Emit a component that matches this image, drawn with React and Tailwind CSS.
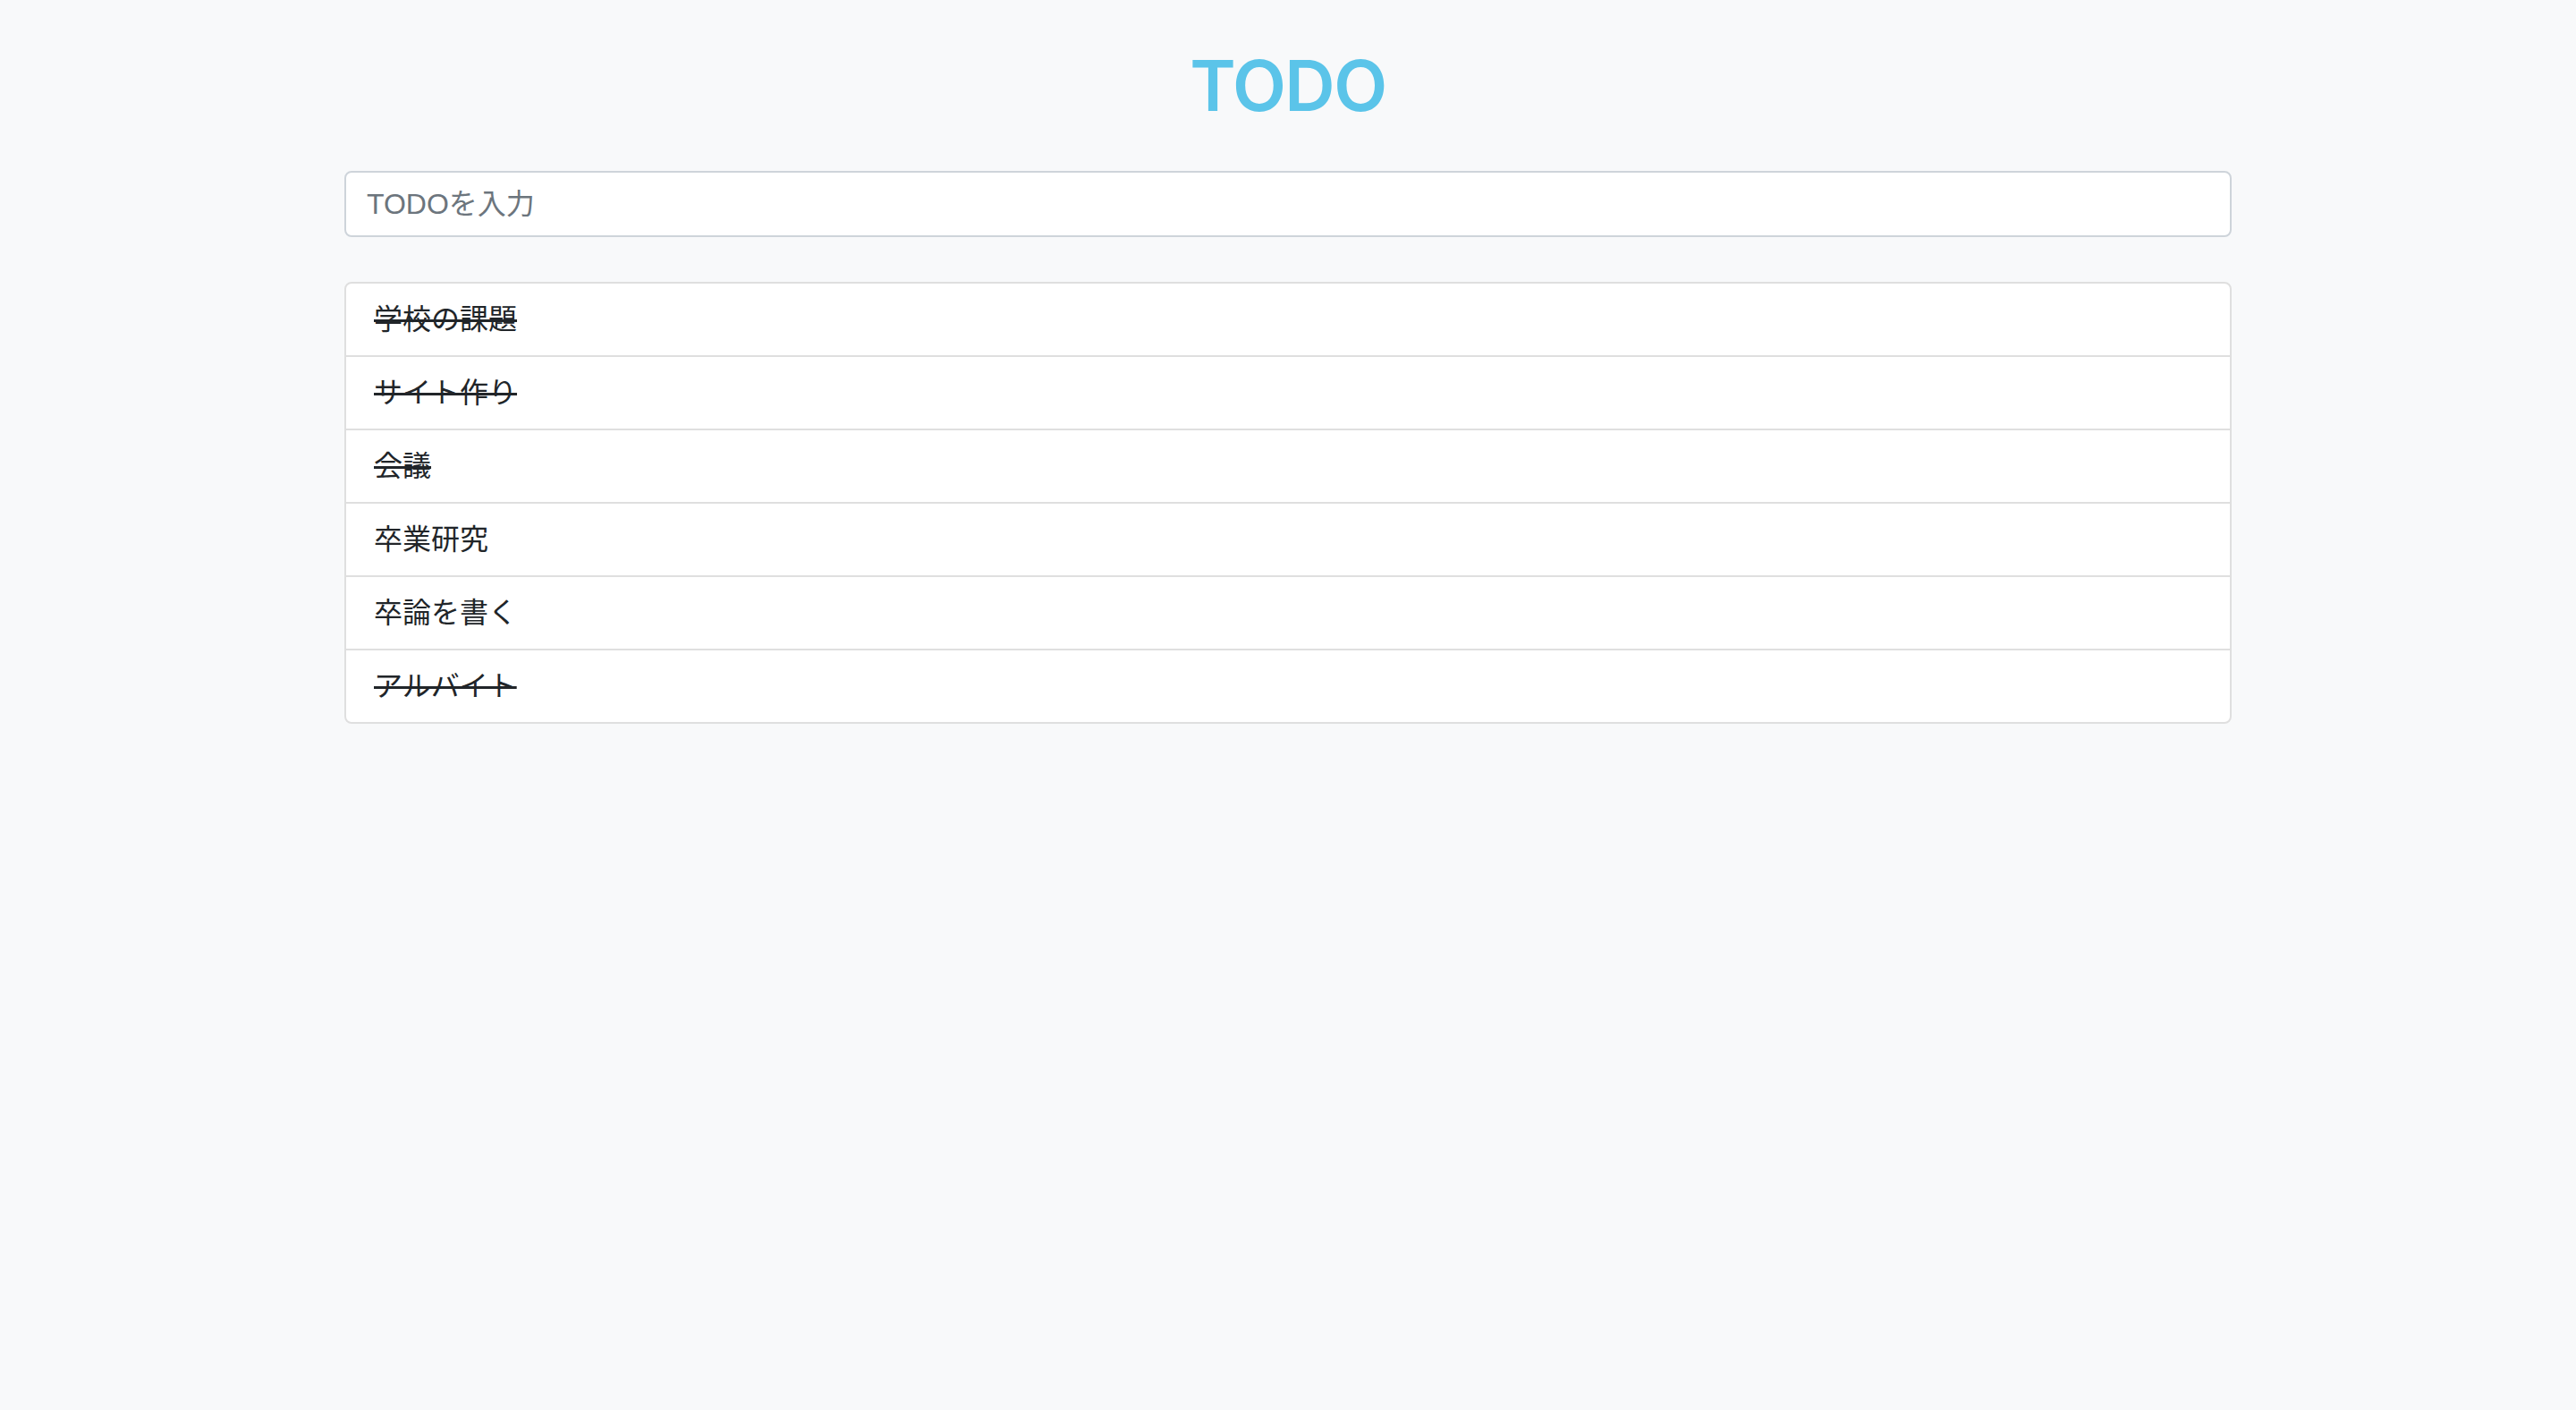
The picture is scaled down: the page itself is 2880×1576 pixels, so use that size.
import React from "react";

const items = [
  { text: "学校の課題", done: true },
  { text: "サイト作り", done: true },
  { text: "会議", done: true },
  { text: "卒業研究", done: false },
  { text: "卒論を書く", done: false },
  { text: "アルバイト", done: true },
];

export default function App() {
  return (
    <div
      className="min-h-screen bg-[#f8f9fa] pt-[56px]"
      style={{ fontFamily: '"Liberation Sans", "Noto Sans CJK JP", sans-serif' }}
    >
      <h1
        className="text-center text-[78px] leading-[80px] font-semibold text-[#5bc4e9] tracking-[-1.5px]"
        style={{ fontFamily: 'Inter, "Liberation Sans", sans-serif' }}
      >
        TODO
      </h1>
      <div className="mx-auto mt-[55px] w-[2110px]">
        <input
          type="text"
          placeholder="TODOを入力"
          className="block h-[74px] w-full rounded-[8px] border-2 border-[#ced4da] bg-white px-[23px] text-[32px] text-[#495057] placeholder:text-[#6c757d] outline-none"
        />
        <ul className="mt-[50px] overflow-hidden rounded-[8px] border-2 border-[#dfdfdf] bg-white">
          {items.map((it, i) => (
            <li
              key={i}
              className={
                "flex h-[80px] items-center px-[31px] text-[32px] text-[#212529] " +
                (i > 0 ? "border-t-2 border-[#dfdfdf] h-[82px]" : "")
              }
            >
              <span className={it.done ? "line-through decoration-[3px]" : ""}>{it.text}</span>
            </li>
          ))}
        </ul>
      </div>
    </div>
  );
}
